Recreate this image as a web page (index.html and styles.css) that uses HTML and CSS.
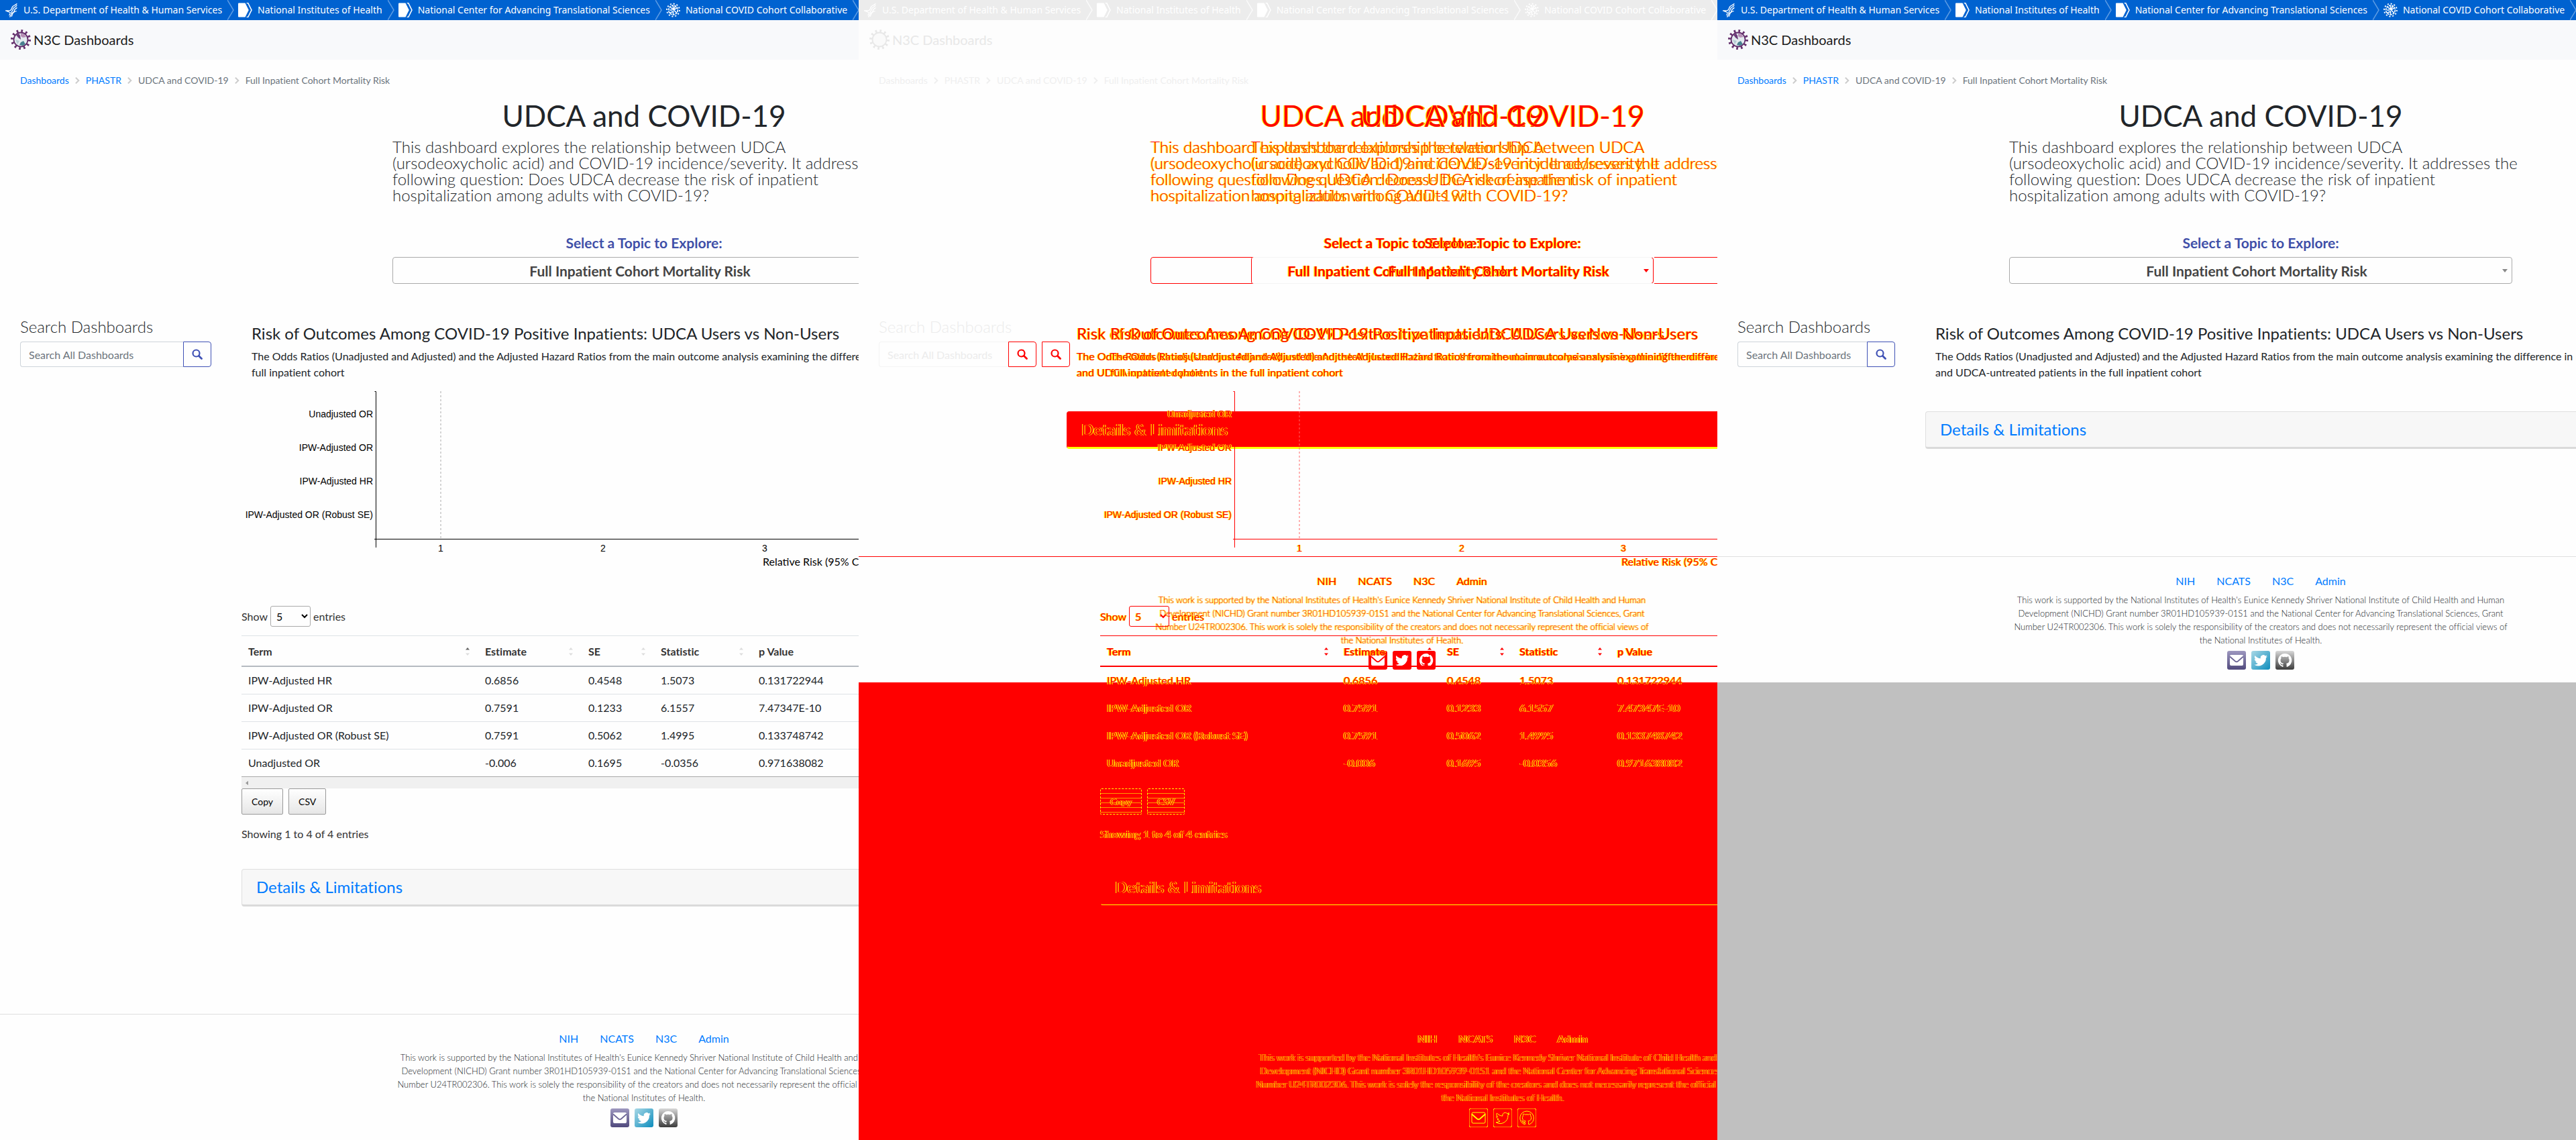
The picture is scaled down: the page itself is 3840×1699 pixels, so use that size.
FILE: index.html
```html
<!DOCTYPE html>
<html lang="en">
<head>
<meta charset="utf-8">
<title>N3C Dashboards - visual comparison</title>
<link rel="stylesheet" href="styles.css">
</head>
<body>
<svg class="defs" aria-hidden="true">
  <defs>
    <linearGradient id="g-mail" x1="0" y1="0" x2="0" y2="1"><stop offset="0" stop-color="#9d97bf"/><stop offset="1" stop-color="#514a7d"/></linearGradient>
    <linearGradient id="g-twitter" x1="0" y1="0" x2="1" y2="1"><stop offset="0" stop-color="#a9d8e6"/><stop offset="1" stop-color="#0c8dbd"/></linearGradient>
    <linearGradient id="g-github" x1="0" y1="0" x2="0" y2="1"><stop offset="0" stop-color="#d8d8d8"/><stop offset="1" stop-color="#3c3c3c"/></linearGradient>
    <symbol id="hhs" viewBox="0 0 22 26"><g fill="none" stroke="currentColor" stroke-linecap="round"><path d="M21 2c-3 3-7 3-8 6s-1 5-4 6H1c3 0 4 2 6 2" stroke-width="1.6"/><path d="M21 5c-2 3-5 3-6 5s-1 4-3 6" stroke-width="1.6"/><path d="M21 9c-1 2-4 2-4 4s-1 4-3 5" stroke-width="1.6"/><path d="M20 15c-3 0-5 3-7 3s-4 0-5-1M9 19l-1 3M12 19l-3 6M14 19l-2 5" stroke-width="1.5"/></g></symbol>
    <symbol id="nih" viewBox="0 0 20 20"><path fill="currentColor" d="M1 0h9l5 10-5 10H1q-1 0-1-1V1q0-1 1-1z"/><path fill="none" stroke="currentColor" stroke-width="1.5" d="M12 0l2 0 5 10-5 10h-2"/></symbol>
    <symbol id="sep" viewBox="0 0 10 30"><path fill="none" stroke="currentColor" stroke-width="1.5" d="M0 0l9 15-9 15"/></symbol>
    <symbol id="virus" viewBox="0 0 20 20"><g fill="none" stroke="currentColor"><circle cx="10" cy="10" r="6.5" stroke-width="1.6" stroke-dasharray="3 1"/><circle cx="10" cy="10" r="9" stroke-width="1.8" stroke-dasharray="2 2.7"/><path stroke-width="1.4" d="M10 4v5l-4-3M15 7l-4 3 4 4M10 16v-4l-5 2M5 10h4M10 10l3-5"/></g></symbol>
    <symbol id="n3c" viewBox="0 0 30 30"><circle cx="15" cy="15" r="12.7" fill="none" stroke="currentColor" stroke-width="4.6" stroke-dasharray="2.6 4.05"/><circle class="globe" cx="15" cy="15" r="10.5" stroke="currentColor" stroke-width="1.8"/></symbol>
    <symbol id="map" viewBox="0 0 30 30"><path fill="#6b3a78" d="M8 8l4-2 2 3 1 6-4-3z"/><path fill="#b78fb5" d="M15 6l5 1 3 4-5 1-3-2z"/><path fill="#b7ccd4" d="M7 15l6 2-3 5z"/><path fill="#487f8f" d="M15 19l4-2 3 5-4 2-5-1z"/></symbol>
    <symbol id="chev" viewBox="0 0 8 12"><path fill="none" stroke="currentColor" stroke-width="2.4" d="M1 1l5 5-5 5"/></symbol>
    <symbol id="caret" viewBox="0 0 8 6"><path fill="currentColor" d="M0 1h8L4 6z"/></symbol>
    <symbol id="search" viewBox="0 0 16 16"><circle cx="6.5" cy="6.5" r="5" fill="none" stroke="currentColor" stroke-width="2.2"/><path stroke="currentColor" stroke-width="2.8" stroke-linecap="round" d="M10.5 10.5l4 4"/></symbol>
    <symbol id="sort" viewBox="0 0 6 12"><path class="up" d="M0 3.500h6L3 0z"/><path class="down" d="M0 8.500h6L3 12z"/></symbol>
    <symbol id="mail" viewBox="0 0 28 28"><rect class="tile-mail" width="28" height="28" rx="3"/><rect x="4" y="6" width="20" height="16" rx="2"/><path class="flap" fill="none" stroke-width="1.8" d="M4 8.500l8 7q2 1.500 4 0l8-7"/></symbol>
    <symbol id="twitter" viewBox="0 0 28 28"><rect class="tile-twitter" width="28" height="28" rx="3"/><path d="M24 8.200c-.7.300-1.500.5-2.400.6.900-.5 1.500-1.300 1.800-2.300-.8.500-1.700.8-2.600 1a4.100 4.100 0 0 0-7 3.700c-3.400-.2-6.400-1.800-8.400-4.300-1.100 1.900-.5 4.300 1.300 5.500-.7 0-1.300-.2-1.900-.5 0 2 1.400 3.700 3.300 4.100-.6.200-1.200.2-1.900.1.500 1.600 2 2.800 3.800 2.800A8.200 8.200 0 0 1 4 20.600a11.600 11.600 0 0 0 17.900-10.300c.8-.6 1.500-1.300 2.100-2.100z"/></symbol>
    <symbol id="github" viewBox="0 0 28 28"><rect class="tile-github" width="28" height="28" rx="3"/><path d="M14 4a10.200 10.200 0 0 0-3.200 19.900c.5.100.7-.2.700-.5v-1.900c-2.800.6-3.500-1.200-3.500-1.200-.5-1.200-1.100-1.500-1.100-1.500-1-.6 0-.6 0-.6 1 0 1.600 1 1.600 1 .9 1.600 2.400 1.100 3 .9.100-.7.400-1.100.7-1.400-2.300-.3-4.700-1.100-4.700-5 0-1.100.4-2 1.100-2.800-.2-.3-.5-1.300.1-2.700 0 0 .9-.3 2.800 1a9.800 9.800 0 0 1 5.100 0c2-1.300 2.800-1 2.800-1 .6 1.400.3 2.400.1 2.700.7.700 1.100 1.700 1.100 2.800 0 3.900-2.400 4.800-4.700 5 .4.300.7.900.7 1.900v2.800c0 .300.200.6.700.5A10.200 10.200 0 0 0 14 4z"/></symbol>
  </defs>
</svg>

<main class="compare">

<!-- Baseline -->
<section class="panel">
<div class="page wide">
  <nav class="gov">
    <a href="#"><svg class="gicon"><use href="#hhs"/></svg>U.S. Department of Health &amp; Human Services<svg class="sep"><use href="#sep"/></svg></a>
    <a href="#"><svg class="gicon"><use href="#nih"/></svg>National Institutes of Health<svg class="sep"><use href="#sep"/></svg></a>
    <a href="#"><svg class="gicon"><use href="#nih"/></svg>National Center for Advancing Translational Sciences<svg class="sep"><use href="#sep"/></svg></a>
    <a href="#"><svg class="gicon"><use href="#virus"/></svg>National COVID Cohort Collaborative<svg class="sep"><use href="#sep"/></svg></a>
  </nav>
  <header class="brand"><a href="#"><svg class="logo"><use href="#n3c"/><use href="#map"/></svg>N3C Dashboards</a></header>
  <nav class="crumbs"><a href="#">Dashboards</a><svg><use href="#chev"/></svg><a href="#">PHASTR</a><svg><use href="#chev"/></svg><span>UDCA and COVID-19</span><svg><use href="#chev"/></svg><span>Full Inpatient Cohort Mortality Risk</span></nav>
  <div class="hero">
    <h1>UDCA and COVID-19</h1>
    <p>This dashboard explores the relationship between UDCA<br>(ursodeoxycholic acid) and COVID-19 incidence/severity. It addresses the<br>following question: Does UDCA decrease the risk of inpatient<br>hospitalization among adults with COVID-19?</p>
    <label for="topic-a">Select a Topic to Explore:</label>
    <div class="topic"><select id="topic-a"><option>Full Inpatient Cohort Mortality Risk</option></select><svg><use href="#caret"/></svg></div>
  </div>
  <div class="row">
    <aside class="side">
      <h2><label for="q-a">Search Dashboards</label></h2>
      <form class="search"><input id="q-a" type="text" placeholder="Search All Dashboards"><button type="button" aria-label="Search"><svg><use href="#search"/></svg></button></form>
    </aside>
    <div class="content">
      <div class="intro">
        <h3>Risk of Outcomes Among COVID-19 Positive Inpatients: UDCA Users vs Non-Users</h3>
        <p>The Odds Ratios (Unadjusted and Adjusted) and the Adjusted Hazard Ratios from the main outcome analysis examining the difference<br>full inpatient cohort</p>
      </div>
      <svg class="chart">
        <line class="ref" x1="297" y1="16" x2="297" y2="236"/>
        <path class="axis" d="M198.500 16.500H200.500V249M198 236.500H1500"/>
        <g text-anchor="end"><text x="196" y="55">Unadjusted OR</text><text x="196" y="105">IPW-Adjusted OR</text><text x="196" y="155">IPW-Adjusted HR</text><text x="196" y="205">IPW-Adjusted OR (Robust SE)</text></g>
        <g text-anchor="middle"><text x="297" y="255">1</text><text x="539" y="255">2</text><text x="780" y="255">3</text></g>
        <text class="title" x="777" y="276">Relative Risk (95% CI)</text>
      </svg>
      <div class="length"><label for="len-a">Show</label><select id="len-a"><option>5</option></select><span>entries</span></div>
      <table>
        <thead><tr><th class="c1"><div>Term<svg class="asc"><use href="#sort"/></svg></div></th><th class="c2"><div>Estimate<svg><use href="#sort"/></svg></div></th><th class="c3"><div>SE<svg><use href="#sort"/></svg></div></th><th class="c4"><div>Statistic<svg><use href="#sort"/></svg></div></th><th>p Value</th></tr></thead>
        <tbody>
          <tr><td>IPW-Adjusted HR</td><td>0.6856</td><td>0.4548</td><td>1.5073</td><td>0.131722944</td></tr>
          <tr><td>IPW-Adjusted OR</td><td>0.7591</td><td>0.1233</td><td>6.1557</td><td>7.47347E-10</td></tr>
          <tr><td>IPW-Adjusted OR (Robust SE)</td><td>0.7591</td><td>0.5062</td><td>1.4995</td><td>0.133748742</td></tr>
          <tr><td>Unadjusted OR</td><td>-0.006</td><td>0.1695</td><td>-0.0356</td><td>0.971638082</td></tr>
        </tbody>
      </table>
      <div class="scroll"><svg viewBox="0 0 5 8"><path d="M5 0v8L0 4z"/></svg></div>
      <div class="exports"><button type="button">Copy</button><button type="button">CSV</button></div>
      <p class="info">Showing 1 to 4 of 4 entries</p>
      <div class="card"><a href="#">Details &amp; Limitations</a></div>
    </div>
  </div>
  <footer>
    <nav><a href="#">NIH</a><a href="#">NCATS</a><a href="#">N3C</a><a href="#">Admin</a></nav>
    <p>This work is supported by the National Institutes of Health's Eunice Kennedy Shriver National Institute of Child Health and Human Development (NICHD) Grant number 3R01HD105939-01S1 and the National Center for Advancing Translational Sciences, Grant Number U24TR002306. This work is solely the responsibility of the creators and does not necessarily represent the official views of the National Institutes of Health.</p>
    <div class="social"><a href="#" aria-label="Mail"><svg><use href="#mail"/></svg></a><a href="#" aria-label="Twitter"><svg><use href="#twitter"/></svg></a><a href="#" aria-label="GitHub"><svg><use href="#github"/></svg></a></div>
  </footer>
</div>
</section>

<!-- Difference -->
<section class="panel diff">
  <div class="shared">
  <nav class="gov">
    <a href="#"><svg class="gicon"><use href="#hhs"/></svg>U.S. Department of Health &amp; Human Services<svg class="sep"><use href="#sep"/></svg></a>
    <a href="#"><svg class="gicon"><use href="#nih"/></svg>National Institutes of Health<svg class="sep"><use href="#sep"/></svg></a>
    <a href="#"><svg class="gicon"><use href="#nih"/></svg>National Center for Advancing Translational Sciences<svg class="sep"><use href="#sep"/></svg></a>
    <a href="#"><svg class="gicon"><use href="#virus"/></svg>National COVID Cohort Collaborative<svg class="sep"><use href="#sep"/></svg></a>
  </nav>
  <header class="brand"><a href="#"><svg class="logo"><use href="#n3c"/></svg>N3C Dashboards</a></header>
  <nav class="crumbs"><a href="#">Dashboards</a><svg><use href="#chev"/></svg><a href="#">PHASTR</a><svg><use href="#chev"/></svg><span>UDCA and COVID-19</span><svg><use href="#chev"/></svg><span>Full Inpatient Cohort Mortality Risk</span></nav>
  </div>
  <div class="stack">
  <div class="page narrow">
    <div class="hero">
      <h1>UDCA and COVID-19</h1>
      <p>This dashboard explores the relationship between UDCA<br>(ursodeoxycholic acid) and COVID-19 incidence/severity. It addresses the<br>following question: Does UDCA decrease the risk of inpatient<br>hospitalization among adults with COVID-19?</p>
      <label for="topic-d1">Select a Topic to Explore:</label>
      <div class="topic"><select id="topic-d1"><option>Full Inpatient Cohort Mortality Risk</option></select><svg><use href="#caret"/></svg></div>
    </div>
    <div class="row">
      <aside class="side">
        <h2><label for="q-d1">Search Dashboards</label></h2>
        <form class="search"><input id="q-d1" type="text" placeholder="Search All Dashboards"><button type="button" aria-label="Search"><svg><use href="#search"/></svg></button></form>
      </aside>
      <div class="content">
        <div class="intro">
          <h3>Risk of Outcomes Among COVID-19 Positive Inpatients: UDCA Users vs Non-Users</h3>
          <p>The Odds Ratios (Unadjusted and Adjusted) and the Adjusted Hazard Ratios from the main outcome analysis examining the difference in mortality<br>and UDCA-untreated patients in the full inpatient cohort</p>
        </div>
        <div class="card"><a href="#">Details &amp; Limitations</a></div>
      </div>
    </div>
    <footer>
      <nav><a href="#">NIH</a><a href="#">NCATS</a><a href="#">N3C</a><a href="#">Admin</a></nav>
      <p>This work is supported by the National Institutes of Health's Eunice Kennedy Shriver National Institute of Child Health and Human Development (NICHD) Grant number 3R01HD105939-01S1 and the National Center for Advancing Translational Sciences, Grant Number U24TR002306. This work is solely the responsibility of the creators and does not necessarily represent the official views of the National Institutes of Health.</p>
      <div class="social"><a href="#" aria-label="Mail"><svg><use href="#mail"/></svg></a><a href="#" aria-label="Twitter"><svg><use href="#twitter"/></svg></a><a href="#" aria-label="GitHub"><svg><use href="#github"/></svg></a></div>
    </footer>
  </div>
  <div class="page wide over">
    <div class="hero">
      <h1>UDCA and COVID-19</h1>
      <p>This dashboard explores the relationship between UDCA<br>(ursodeoxycholic acid) and COVID-19 incidence/severity. It addresses the<br>following question: Does UDCA decrease the risk of inpatient<br>hospitalization among adults with COVID-19?</p>
      <label for="topic-d2">Select a Topic to Explore:</label>
      <div class="topic"><select id="topic-d2"><option>Full Inpatient Cohort Mortality Risk</option></select></div>
    </div>
    <div class="row">
      <aside class="side">
        <form class="search"><button type="button" aria-label="Search"><svg><use href="#search"/></svg></button></form>
      </aside>
      <div class="content">
        <div class="intro">
          <h3>Risk of Outcomes Among COVID-19 Positive Inpatients: UDCA Users vs Non-Users</h3>
          <p>The Odds Ratios (Unadjusted and Adjusted) and the Adjusted Hazard Ratios from the main outcome analysis examining the difference<br>full inpatient cohort</p>
        </div>
        <svg class="chart">
          <line class="ref" x1="297" y1="16" x2="297" y2="236"/>
          <path class="axis" d="M198.500 16.500H200.500V249M198 236.500H1500"/>
          <g text-anchor="end"><text x="196" y="55">Unadjusted OR</text><text x="196" y="105">IPW-Adjusted OR</text><text x="196" y="155">IPW-Adjusted HR</text><text x="196" y="205">IPW-Adjusted OR (Robust SE)</text></g>
          <g text-anchor="middle"><text x="297" y="255">1</text><text x="539" y="255">2</text><text x="780" y="255">3</text></g>
          <text class="title" x="777" y="276">Relative Risk (95% CI)</text>
        </svg>
        <div class="length"><label for="len-d">Show</label><select id="len-d"><option>5</option></select><span>entries</span></div>
        <table>
          <thead><tr><th class="c1"><div>Term<svg class="asc"><use href="#sort"/></svg></div></th><th class="c2"><div>Estimate<svg><use href="#sort"/></svg></div></th><th class="c3"><div>SE<svg><use href="#sort"/></svg></div></th><th class="c4"><div>Statistic<svg><use href="#sort"/></svg></div></th><th>p Value</th></tr></thead>
          <tbody>
            <tr><td>IPW-Adjusted HR</td><td>0.6856</td><td>0.4548</td><td>1.5073</td><td>0.131722944</td></tr>
            <tr><td>IPW-Adjusted OR</td><td>0.7591</td><td>0.1233</td><td>6.1557</td><td>7.47347E-10</td></tr>
            <tr><td>IPW-Adjusted OR (Robust SE)</td><td>0.7591</td><td>0.5062</td><td>1.4995</td><td>0.133748742</td></tr>
            <tr><td>Unadjusted OR</td><td>-0.006</td><td>0.1695</td><td>-0.0356</td><td>0.971638082</td></tr>
          </tbody>
        </table>
        <div class="scroll"></div>
        <div class="exports"><button type="button">Copy</button><button type="button">CSV</button></div>
        <p class="info">Showing 1 to 4 of 4 entries</p>
        <div class="card"><a href="#">Details &amp; Limitations</a></div>
      </div>
    </div>
    <footer>
      <nav><a href="#">NIH</a><a href="#">NCATS</a><a href="#">N3C</a><a href="#">Admin</a></nav>
      <p>This work is supported by the National Institutes of Health's Eunice Kennedy Shriver National Institute of Child Health and Human Development (NICHD) Grant number 3R01HD105939-01S1 and the National Center for Advancing Translational Sciences, Grant Number U24TR002306. This work is solely the responsibility of the creators and does not necessarily represent the official views of the National Institutes of Health.</p>
      <div class="social"><a href="#" aria-label="Mail"><svg><use href="#mail"/></svg></a><a href="#" aria-label="Twitter"><svg><use href="#twitter"/></svg></a><a href="#" aria-label="GitHub"><svg><use href="#github"/></svg></a></div>
    </footer>
  </div>
  </div>
</section>

<!-- Current -->
<section class="panel current">
<div class="page narrow">
  <nav class="gov">
    <a href="#"><svg class="gicon"><use href="#hhs"/></svg>U.S. Department of Health &amp; Human Services<svg class="sep"><use href="#sep"/></svg></a>
    <a href="#"><svg class="gicon"><use href="#nih"/></svg>National Institutes of Health<svg class="sep"><use href="#sep"/></svg></a>
    <a href="#"><svg class="gicon"><use href="#nih"/></svg>National Center for Advancing Translational Sciences<svg class="sep"><use href="#sep"/></svg></a>
    <a href="#"><svg class="gicon"><use href="#virus"/></svg>National COVID Cohort Collaborative<svg class="sep"><use href="#sep"/></svg></a>
  </nav>
  <header class="brand"><a href="#"><svg class="logo"><use href="#n3c"/><use href="#map"/></svg>N3C Dashboards</a></header>
  <nav class="crumbs"><a href="#">Dashboards</a><svg><use href="#chev"/></svg><a href="#">PHASTR</a><svg><use href="#chev"/></svg><span>UDCA and COVID-19</span><svg><use href="#chev"/></svg><span>Full Inpatient Cohort Mortality Risk</span></nav>
  <div class="hero">
    <h1>UDCA and COVID-19</h1>
    <p>This dashboard explores the relationship between UDCA<br>(ursodeoxycholic acid) and COVID-19 incidence/severity. It addresses the<br>following question: Does UDCA decrease the risk of inpatient<br>hospitalization among adults with COVID-19?</p>
    <label for="topic-b">Select a Topic to Explore:</label>
    <div class="topic"><select id="topic-b"><option>Full Inpatient Cohort Mortality Risk</option></select><svg><use href="#caret"/></svg></div>
  </div>
  <div class="row">
    <aside class="side">
      <h2><label for="q-b">Search Dashboards</label></h2>
      <form class="search"><input id="q-b" type="text" placeholder="Search All Dashboards"><button type="button" aria-label="Search"><svg><use href="#search"/></svg></button></form>
    </aside>
    <div class="content">
      <div class="intro">
        <h3>Risk of Outcomes Among COVID-19 Positive Inpatients: UDCA Users vs Non-Users</h3>
        <p>The Odds Ratios (Unadjusted and Adjusted) and the Adjusted Hazard Ratios from the main outcome analysis examining the difference in mortality<br>and UDCA-untreated patients in the full inpatient cohort</p>
      </div>
      <div class="card"><a href="#">Details &amp; Limitations</a></div>
    </div>
  </div>
  <footer>
    <nav><a href="#">NIH</a><a href="#">NCATS</a><a href="#">N3C</a><a href="#">Admin</a></nav>
    <p>This work is supported by the National Institutes of Health's Eunice Kennedy Shriver National Institute of Child Health and Human Development (NICHD) Grant number 3R01HD105939-01S1 and the National Center for Advancing Translational Sciences, Grant Number U24TR002306. This work is solely the responsibility of the creators and does not necessarily represent the official views of the National Institutes of Health.</p>
    <div class="social"><a href="#" aria-label="Mail"><svg><use href="#mail"/></svg></a><a href="#" aria-label="Twitter"><svg><use href="#twitter"/></svg></a><a href="#" aria-label="GitHub"><svg><use href="#github"/></svg></a></div>
  </footer>
</div>
</section>

</main>
</body>
</html>
```
FILE: styles.css
```css
* { box-sizing: border-box; }
body {
  margin: 0;
  font-family: Lato, "Liberation Sans", sans-serif;
  font-size: 16px;
  line-height: 24px;
  color: #212529;
  font-variant-ligatures: none;
}
h1, h2, h3, p { margin: 0; font-weight: 400; }
a { color: #007bff; text-decoration: none; }
input, select, button { font-family: inherit; font-variant-ligatures: inherit; margin: 0; }
.defs { position: absolute; width: 0; height: 0; }

/* Three captures side by side; each one is cut off at its column's edge */
.compare { display: grid; grid-template-columns: repeat(3, minmax(0, 1fr)); }
.panel { overflow: hidden; background: #fff; }
.current { background: #c0c0c0; }
.page { background: #fefefe; }
.wide { width: calc(100% + 640px); }
.narrow { width: calc(100% + 340px); }

/* Agency bar */
.gov { display: flex; height: 30px; background: #0062d0; }
.gov a {
  display: flex;
  align-items: center;
  gap: 8px;
  padding-left: 6px;
  color: #fff;
  font: 400 14px/30px "Noto Sans", sans-serif;
  white-space: nowrap;
}
.gicon { width: 21px; height: 22px; }
.sep { width: 10px; height: 30px; color: #5c9be3; }

.brand { display: flex; align-items: center; height: 59px; padding: 0 0 2px 16px; background: #f8f9fb; }
.brand a { display: flex; align-items: center; gap: 4px; color: #1b1b1b; font-size: 20px; }
.logo { width: 30px; height: 30px; color: #642f6c; }
.globe { fill: var(--globe, #e3ebef); }

.crumbs { display: flex; align-items: center; gap: 9px; padding: 21px 30px 0; font-size: 14px; line-height: 20px; color: #6c757d; }
.crumbs svg { width: 7px; height: 12px; color: #ccc; }

/* Title, lead and topic selector */
.hero { display: flex; flex-direction: column; width: 750px; margin: 0 auto; padding-top: 16px; }
.hero h1 { font-size: 44px; line-height: 52px; text-align: center; }
.hero p { margin-top: 9px; font-size: 24px; line-height: 24px; font-weight: 300; white-space: nowrap; }
.hero label { margin: 47px 0 9px; font-size: 21px; font-weight: 700; text-align: center; color: #3f4fa8; }
.topic { display: grid; align-items: center; }
.topic select, .topic svg { grid-area: 1 / 1; }
.topic select {
  appearance: none;
  height: 40px;
  padding: 0 18px 0 6px;
  border: 1px solid #aaa;
  border-radius: 4px;
  background: transparent;
  color: #444;
  font-size: 21px;
  font-weight: 700;
  text-align: center;
  text-align-last: center;
}
.topic svg { justify-self: end; width: 8px; height: 6px; margin-right: 7px; color: #888; pointer-events: none; }

/* Sidebar and content */
.row { display: flex; padding: 50px 15px 160px; }
.side { flex: 0 0 16.6667%; min-width: 0; padding: 0 15px; }
.side h2 { margin-bottom: 8px; font-size: 24px; line-height: 28px; font-weight: 300; }
.search { display: flex; }
.search input {
  flex: 1;
  min-width: 0;
  height: 38px;
  padding: 0 12px;
  border: 1px solid #ced4da;
  border-right: 0;
  border-radius: 4px 0 0 4px;
  background: transparent;
  font-size: 16px;
}
.search input::placeholder { color: #6c757d; opacity: 1; }
.search button {
  display: flex;
  align-items: center;
  justify-content: center;
  width: 42px;
  height: 38px;
  padding: 0;
  border: 1px solid #3f51b5;
  border-radius: 0 4px 4px 0;
  background: transparent;
  color: #3f51b5;
}
.search svg { width: 16px; height: 16px; }

.content { flex: 1; min-width: 0; padding: 10px 15px 0 30px; }
.intro { padding-left: 15px; white-space: nowrap; }
.intro h3 { margin-bottom: 8px; font-size: 24px; line-height: 28px; }

.chart { display: block; width: 100%; height: 290px; overflow: visible; font: 14px "Liberation Sans", Arial, sans-serif; }
.chart .axis { fill: none; stroke: #000; }
.chart .ref { stroke: #aaa; stroke-dasharray: 3 3; }
.chart .title { font: 16px Lato, sans-serif; }

.length { display: flex; align-items: center; gap: 4px; margin: 46px 0 13px; color: #333; }
.length select { width: 60px; height: 31px; padding: 4px; border: 1px solid #aaa; border-radius: 3px; background: transparent; font-size: 16px; }

table { width: 100%; table-layout: fixed; border-collapse: separate; border-spacing: 0; border-top: 1px solid #dee2e6; }
th { padding: 11px 10px 9px; border-bottom: 2px solid #b5bac0; text-align: left; font-weight: 700; color: #333; }
th div { display: flex; align-items: center; justify-content: space-between; padding-right: 3px; }
th svg { width: 6px; height: 12px; fill: #ddd; }
.asc { --up: #666; }
.up { fill: var(--up, #ddd); }
.c1 { width: 353px; }
.c2 { width: 154px; }
.c3 { width: 108px; }
.c4 { width: 146px; }
td { padding: 8px 10px; border-bottom: 1px solid #dee2e6; }
tbody tr:last-child td { border-bottom-color: #aaa; }
.scroll { display: flex; align-items: center; height: 17px; padding-left: 6px; background: #f0f0f0; }
.scroll svg { width: 4px; height: 8px; fill: #999; }

.exports { display: flex; gap: 8px; }
.exports button {
  height: 39px;
  padding: 0 14px;
  border: 1px solid #999;
  border-radius: 2px;
  background: linear-gradient(#fff, #e6e6e6);
  color: #000;
  font-size: 14px;
}
.info { margin: 17px 0 40px; color: #333; }
.card { padding: 12px 21px; border: 1px solid #dfdfdf; border-bottom: 3px solid #dadada; border-radius: 4px; background: #f7f7f7; font-size: 24px; line-height: 28px; }
.intro + .card { margin-top: 46px; }

/* Footer */
footer { display: flex; flex-direction: column; align-items: center; padding: 24px 0 19px; border-top: 1px solid #dfdfdf; }
footer nav { display: flex; gap: 32px; }
footer p { width: 750px; margin: 6px 0; font-size: 13px; line-height: 20px; font-weight: 300; text-align: center; }
.social { display: flex; gap: 8px; }
.social a { display: flex; }
.social svg { width: 28px; height: 28px; fill: #fff; }
.tile-mail { fill: var(--tile, url(#g-mail)); }
.tile-twitter { fill: var(--tile, url(#g-twitter)); }
.tile-github { fill: var(--tile, url(#g-github)); }
.flap { stroke: var(--flap, #6d6696); }

/* Difference view: unchanged parts fade to grey, changed pixels turn red with yellow edges */
.diff { background: #f00; --globe: #fafafa; }
.shared { background: #fefefe; }
.shared .gov { background: #ececec; }
.shared .sep { color: #fafafa; }
.shared .brand { background: #fdfdfd; }
.shared .brand a, .shared .logo { color: #e8e8e8; }
.shared .crumbs, .shared .crumbs a, .shared .crumbs svg { color: #efefef; }
.stack { display: grid; grid-template-columns: 100%; align-items: start; }
.stack > .page { grid-area: 1 / 1; }
.stack .over { background: transparent; }
.stack .hero, .stack .content, .stack footer, .stack footer a, .stack .card a,
.stack .length, .stack th, .stack .info, .stack select, .stack .hero label, .stack .exports button {
  color: #f00;
  text-shadow: 1px 0 #ff0, -1px 0 #ff0;
}
.stack .chart text { fill: #f00; text-shadow: 1px 0 #ff0, -1px 0 #ff0; }
.stack .side { color: #ececec; }
.stack .search input { border-color: #f4f4f4; }
.stack .search input::placeholder { color: #ececec; }
.stack .search button { border-color: #f00; color: #f00; background: #fff; }
.stack .topic select { border-color: #f00; }
.stack .topic svg { color: #f00; }
.stack .over .topic select {
  border-width: 0 1px;
  background:
    linear-gradient(90deg, #f4f4f4 600px, #f00 600px) top / 100% 1px no-repeat,
    linear-gradient(90deg, #f4f4f4 600px, #f00 600px) bottom / 100% 1px no-repeat;
}
.over .search { justify-content: flex-end; padding-top: 36px; }
.stack .card { background: #f00; border-color: #f00; border-bottom: 3px solid #ff0; }
.stack .over .card { border-bottom-width: 1px; margin-bottom: 2px; }
.stack .axis { stroke: #f00; }
.stack .ref { stroke: #f66; }
.stack .length select { border-color: #f00; }
.stack table, .stack th, .stack td { border-color: #f00; }
.stack tbody tr:last-child td { border-color: #f00; }
.stack th svg { fill: #f00; --up: #f00; }
.stack .scroll { background: transparent; }
.stack .exports button { border: 1px dashed #ff0; background: repeating-linear-gradient(#f00 0 6px, #f90 6px 7px); }
.stack footer { border-color: #f00; }
.stack .social { --tile: #f00; --flap: #f00; }
.stack .over .social { --flap: #ff0; }
.stack .over .social svg { fill: #f00; stroke: #ff0; }
```
